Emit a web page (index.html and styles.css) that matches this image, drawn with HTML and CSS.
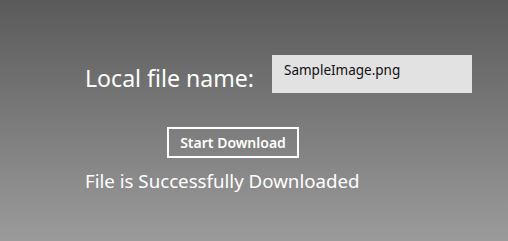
FILE: index.html
```html
<!DOCTYPE html>
<html>
<head>
<meta charset="utf-8">
<link rel="stylesheet" href="styles.css">
</head>
<body>
<div class="page">
  <div class="row">
    <span class="label">Local file name:</span>
    <div class="textbox">SampleImage.png</div>
  </div>
  <div class="actions">
    <button class="btn">Start Download</button>
  </div>
  <div class="status">File is Successfully Downloaded</div>
</div>
</body>
</html>
```
FILE: styles.css
```css
html, body {
  margin: 0;
  padding: 0;
}
body {
  width: 508px;
  height: 241px;
  overflow: hidden;
  background: linear-gradient(to bottom, #5a5a5a 0%, #9b9b9b 100%);
  font-family: "Noto Sans", "Open Sans", sans-serif;
  color: #ffffff;
}
.page {
  padding: 55px 0 0 85px;
  box-sizing: border-box;
}
.row {
  display: flex;
  align-items: flex-start;
  height: 38px;
}
.label {
  font-size: 23.1px;
  width: 187px;
  line-height: 38px;
  padding-top: 4px;
  white-space: nowrap;
}
.textbox {
  width: 200px;
  height: 38px;
  box-sizing: border-box;
  background: #e2e2e2;
  color: #111111;
  font-size: 13.5px;
  padding: 5px 12px;
  line-height: 20px;
}
.actions {
  margin-top: 34px;
  padding-left: 82px;
}
.btn {
  width: 132px;
  height: 31px;
  box-sizing: border-box;
  border: 2px solid #ffffff;
  background: transparent;
  color: #ffffff;
  font-family: "Noto Sans", "Open Sans", sans-serif;
  font-weight: 600;
  font-size: 14px;
  padding: 0;
  display: block;
}
.status {
  margin-top: 11px;
  font-size: 18.7px;
  line-height: 24px;
  white-space: nowrap;
}
```
